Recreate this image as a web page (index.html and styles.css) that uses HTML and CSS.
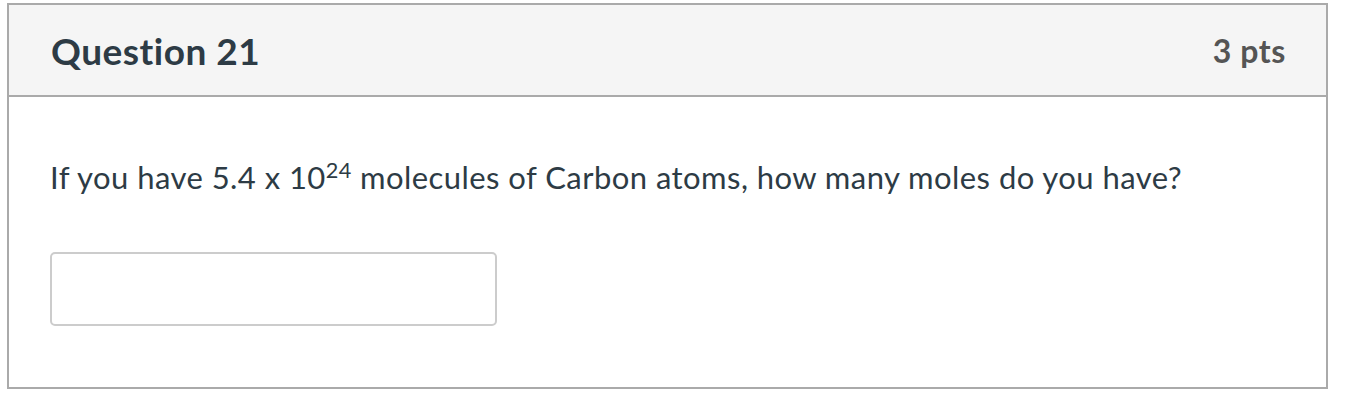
FILE: index.html
```html
<!DOCTYPE html>
<html>
<head>
<meta charset="utf-8">
<link rel="stylesheet" href="styles.css">
</head>
<body>
<div class="question">
  <div class="question-header">
    <span class="question-title">Question 21</span>
    <span class="question-points">3 pts</span>
  </div>
  <div class="question-body">
    <p class="question-text">If you have 5.4 x 10<sup>24</sup> molecules of Carbon atoms, how many moles do you have?</p>
    <input class="answer-input" type="text">
  </div>
</div>
</body>
</html>
```

FILE: styles.css
```css
html, body {
  margin: 0;
  padding: 0;
  background: #ffffff;
}
body {
  padding: 3px 0 0 7px;
  font-family: Lato, "Open Sans", sans-serif;
}
.question {
  width: 1321px;
  height: 386px;
  box-sizing: border-box;
  border: 2px solid #aaaaaa;
  display: flex;
  flex-direction: column;
}
.question-header {
  height: 92px;
  box-sizing: border-box;
  background: #f5f5f5;
  border-bottom: 2px solid #aaaaaa;
  display: flex;
  align-items: center;
  justify-content: space-between;
  padding: 0 40px 0 42px;
}
.question-title {
  font-weight: 700;
  font-size: 37px;
  letter-spacing: 0.5px;
  color: #2d3b45;
}
.question-points {
  font-weight: 700;
  font-size: 32px;
  letter-spacing: 0.6px;
  color: #555555;
}
.question-body {
  padding: 0 41px 0 41px;
}
.question-text {
  margin: 60px 0 0 0;
  font-size: 31px;
  line-height: 40px;
  letter-spacing: 0.45px;
  color: #2d3b45;
}
.question-text sup {
  font-size: 0.7em;
  line-height: 0;
  letter-spacing: 0.3px;
}
.answer-input {
  display: block;
  margin-top: 55px;
  width: 447px;
  height: 74px;
  box-sizing: border-box;
  border: 2px solid #cccccc;
  border-radius: 5px;
  background: #ffffff;
  outline: none;
}
```
